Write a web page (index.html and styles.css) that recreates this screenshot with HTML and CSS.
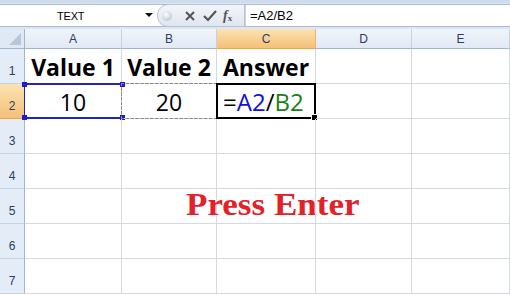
FILE: index.html
```html
<!DOCTYPE html>
<html>
<head>
<meta charset="utf-8">
<link rel="stylesheet" href="styles.css">
</head>
<body>
<div class="app">
  <div class="fbar-band">
    <div class="fbar">
      <div class="namebox"><span class="name">TEXT</span><span class="arrow"></span></div>
      <div class="pill">
        <span class="dot"></span>
        <svg class="ico" width="14" height="14" viewBox="0 0 14 14"><path d="M3 3 L11 11 M11 3 L3 11" stroke="#555" stroke-width="2" fill="none"/></svg>
        <svg class="ico" width="16" height="14" viewBox="0 0 16 14"><path d="M2 7 L6 11 L14 2" stroke="#555" stroke-width="2.2" fill="none"/></svg>
        <span class="fx"><i>f</i><sub>x</sub></span>
      </div>
      <div class="formula">=A2/B2</div>
    </div>
  </div>
  <div class="sheet">
    <div class="corner"><span class="tri"></span></div>
    <div class="ch">A</div>
    <div class="ch">B</div>
    <div class="ch sel">C</div>
    <div class="ch">D</div>
    <div class="ch">E</div>

    <div class="rh">1</div>
    <div class="c bold">Value 1</div>
    <div class="c bold">Value 2</div>
    <div class="c bold left">Answer</div>
    <div class="c"></div>
    <div class="c"></div>

    <div class="rh sel">2</div>
    <div class="c num"><span class="blue-box"><i class="h tl"></i><i class="h tr"></i><i class="h bl"></i><i class="h br"></i></span>10</div>
    <div class="c num"><span class="ants"></span>20</div>
    <div class="c num left"><span class="active"><i class="fill"></i></span><span class="f">=<b class="ref-a">A2</b>/<b class="ref-b">B2</b></span></div>
    <div class="c"></div>
    <div class="c"></div>

    <div class="rh">3</div><div class="c"></div><div class="c"></div><div class="c"></div><div class="c"></div><div class="c"></div>
    <div class="rh">4</div><div class="c"></div><div class="c"></div><div class="c"></div><div class="c"></div><div class="c"></div>
    <div class="rh">5</div><div class="c"></div><div class="c"><span class="press">Press Enter</span></div><div class="c"></div><div class="c"></div><div class="c"></div>
    <div class="rh">6</div><div class="c"></div><div class="c"></div><div class="c"></div><div class="c"></div><div class="c"></div>
    <div class="rh">7</div><div class="c"></div><div class="c"></div><div class="c"></div><div class="c"></div><div class="c"></div>
  </div>
</div>
</body>
</html>
```
FILE: styles.css
```css
html, body { margin: 0; padding: 0; background: #fff; }
body { width: 510px; height: 295px; overflow: hidden; font-family: "Open Sans", "DejaVu Sans", sans-serif; }
.app { width: 510px; }

.fbar-band {
  height: 29px;
  background: #dde7f4;
  border-top: 3px solid #cfdcee;
  box-sizing: border-box;
  padding-top: 1px;
}
.fbar {
  display: flex;
  height: 21px;
  background: #fff;
  border-top: 1px solid #a9bcd6;
  border-bottom: 1px solid #a9bcd6;
}
.namebox {
  width: 157px;
  display: flex;
  align-items: center;
  position: relative;
  font-size: 11px;
  color: #000;
}
.name { margin-left: 57px; font-family: "Liberation Sans", sans-serif; letter-spacing: -0.2px; }
.arrow {
  position: absolute; left: 145px; top: 8px;
  width: 0; height: 0;
  border-left: 4px solid transparent; border-right: 4px solid transparent; border-top: 4px solid #111;
}
.pill {
  width: 88px;
  display: flex; align-items: center; gap: 5px;
  background: linear-gradient(#f3f6fa, #dfe6ef);
  border: 1px solid #b4c3d6;
  border-radius: 11px 0 0 11px;
  box-sizing: border-box;
  padding-left: 4px;
  margin-top: -1px; height: 23px;
}
.dot { width: 10px; height: 10px; border-radius: 50%; background: radial-gradient(circle at 40% 35%, #fff, #c3ccd7 70%, #aab5c2); margin-right: 6px; }
.ico { display: block; }
.fx { font-family: "Liberation Serif", serif; font-size: 14px; color: #555; font-weight: bold; line-height: 1; }
.fx sub { font-size: 9px; vertical-align: -1px; }
.formula { flex: 1; padding-left: 4px; font-family: "Liberation Sans", sans-serif; font-size: 13px; line-height: 21px; border-left: 1px solid #c9d4e2; }

.sheet {
  display: grid;
  grid-template-columns: 25px 97px 95px 99px 96px 98px;
  grid-template-rows: 20px repeat(7, 35px);
}
.corner {
  background: #dfe8f5;
  border-right: 1px solid #9eb6ce;
  border-bottom: 1px solid #9eb6ce;
  position: relative;
  box-sizing: border-box;
}
.tri {
  position: absolute; right: 3px; bottom: 3px;
  width: 0; height: 0;
  border-left: 12px solid transparent;
  border-bottom: 12px solid #b6c7dc;
}
.ch {
  background: linear-gradient(#f1f5fb, #e1e9f4);
  border-right: 1px solid #c5d2e2;
  border-bottom: 1px solid #9eb6ce;
  box-sizing: border-box;
  display: flex; align-items: center; justify-content: center;
  font-size: 12px; color: #27415f;
  font-family: "Liberation Sans", sans-serif;
}
.ch.sel { background: linear-gradient(#fbe3b0, #f4c078); border-right-color: #f2b45b; border-bottom-color: #f2a73e; }
.rh {
  background: #e4ecf7;
  border-right: 1px solid #9eb6ce;
  border-bottom: 1px solid #c5d2e2;
  box-sizing: border-box;
  display: flex; align-items: flex-end; justify-content: center;
  padding-bottom: 5px;
  font-size: 12px; color: #27415f;
  font-family: "Liberation Sans", sans-serif;
}
.rh.sel { background: linear-gradient(#fbe3b0, #f4c078); border-bottom-color: #f2a73e; }
.c {
  border-right: 1px solid #d4d9e3;
  border-bottom: 1px solid #d4d9e3;
  box-sizing: border-box;
  position: relative;
  display: flex; align-items: flex-end; justify-content: center;
  padding-bottom: 0px;
  font-family: "Open Sans", sans-serif;
  font-size: 23px; line-height: 32px; color: #000;
}
.c.bold { font-weight: bold; }
.c.left { justify-content: flex-start; padding-left: 6px; }
.f { font-size: 24px; }

.blue-box {
  position: absolute; left: -1px; top: -1px; right: -1px; bottom: -1px;
  border-top: 2px solid #2323c4; border-bottom: 2px solid #2323c4; border-left: 1px solid #2323c4;
}
.h { position: absolute; width: 5px; height: 5px; background: #1c1cd6; }
.h.tl { left: -3px; top: -3px; } .h.tr { right: -3px; top: -3px; }
.h.bl { left: -3px; bottom: -3px; } .h.br { right: -3px; bottom: -3px; }
.ants {
  position: absolute; left: -1px; top: -1px; right: -1px; bottom: -1px;
  border: 1px dashed #1f4f1f;
}
.ants::after {
  content: ""; position: absolute; inset: -1px;
  border: 1px dashed #e8a0e0;
  opacity: 0.6;
}
.active {
  position: absolute; left: -1px; top: -1px; right: -1px; bottom: -1px;
  border: 2px solid #000;
}
.fill { position: absolute; right: -4px; bottom: -4px; width: 5px; height: 5px; background: #000; border: 1px solid #fff; }
.f b { font-weight: normal; }
.ref-a { color: #1010d8; }
.ref-b { color: #1a7f1a; }
.press {
  position: absolute; left: 64px; top: 0px;
  white-space: nowrap;
  font-family: "Liberation Serif", serif; font-weight: bold;
  font-size: 31px; color: #e3212b;
  transform: scaleX(1.13); transform-origin: left center;
}
```
